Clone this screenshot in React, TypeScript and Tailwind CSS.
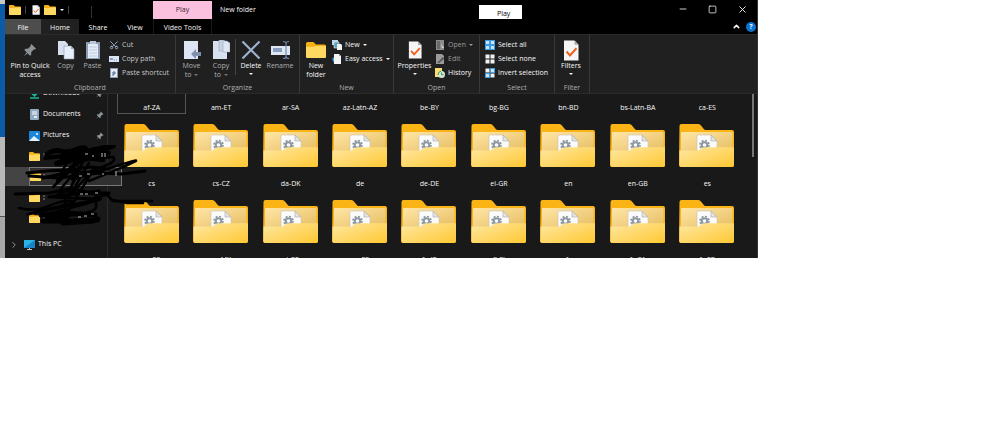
import type { ReactNode } from 'react';
import { Scissors, X, Minus, Square, ChevronUp, ChevronRight } from 'lucide-react';

const folderNames = [
  'af-ZA', 'am-ET', 'ar-SA', 'az-Latn-AZ', 'be-BY', 'bg-BG', 'bn-BD', 'bs-Latn-BA', 'ca-ES',
  'cs', 'cs-CZ', 'da-DK', 'de', 'de-DE', 'el-GR', 'en', 'en-GB', 'es',
  'es-ES', 'es-MX', 'et-EE', 'eu-ES', 'fa-IR', 'fi-FI', 'fr', 'fr-CA', 'fr-FR',
];

function SmallFolder({ className = 'w-3 h-3' }: { className?: string }) {
  return (
    <svg viewBox="0 0 24 20" preserveAspectRatio="none" className={className} aria-hidden="true">
      <path d="M0 2q0-2 2-2h7l3 3h10q2 0 2 2v13q0 2-2 2H2q-2 0-2-2z" fill="#f5b014" />
      <path d="M0 6h10l2-1h12v13q0 2-2 2H2q-2 0-2-2z" fill="#ffd862" />
    </svg>
  );
}

function BigFolder() {
  return (
    <svg viewBox="0 0 56 44" className="w-14 h-11 shrink-0" aria-hidden="true">
      <defs>
        <linearGradient id="front" x1="0" y1="0" x2="1" y2="1">
          <stop offset="0" stopColor="#ffe8a3" />
          <stop offset="1" stopColor="#ffc832" />
        </linearGradient>
        <linearGradient id="inner" x1="0" y1="0" x2="1" y2="1">
          <stop offset="0" stopColor="#ffe6a6" />
          <stop offset="1" stopColor="#e6bd62" />
        </linearGradient>
      </defs>
      <path d="M.5 2Q.5 0 2.500 0h16.500q1.500 0 2.500 1l3.500 4.300q.6.700 1.500.7h26.500q2 0 2 2V41q0 2-2 2h-51q-2 0-2-2z" fill="#fbb415" />
      <rect x="2" y="8" width="51.500" height="20" rx="1" fill="url(#inner)" />
      <path d="M18 11h14l6 6v12h-20z" fill="#fbfbfb" stroke="#c9c4b6" strokeWidth=".6" />
      <path d="M32 11v6h6z" fill="#e3e3e3" stroke="#aaa" strokeWidth=".6" />
      <circle cx="25.500" cy="21" r="2.800" fill="none" stroke="#8b97a3" strokeWidth="2" />
      <circle cx="25.500" cy="21" r="4.500" fill="none" stroke="#8b97a3" strokeWidth="1.600" strokeDasharray="2 1.530" />
      <path d="M.5 26.500h18q1.500 0 2.500-1l1.500-1.300q1-1 2.500-1h30V41q0 2-2 2h-50.500q-2 0-2-2z" fill="url(#front)" />
    </svg>
  );
}

function SheetCheck({ className }: { className: string }) {
  return (
    <svg viewBox="0 0 16 20" preserveAspectRatio="none" className={className} aria-hidden="true">
      <path d="M1 .5h10.500l4 4v15H1z" fill="#f5f5f5" />
      <path d="M11.500.5v4h4z" fill="#a8a8a8" />
      <path d="M3.500 11l3.500 3.800 6.500-7" fill="none" stroke="#f0601e" strokeWidth="2" />
    </svg>
  );
}

function PinIcon({ className }: { className: string }) {
  return (
    <svg viewBox="0 0 16 16" className={`${className} fill-[#8d9499]`} aria-hidden="true">
      <path d="M9.500 1l5.500 5.500-1.500 1-1.200-.2-3 3.200.2 2.700-1.500 1.300-2.700-2.800L1 15l3.300-4.300L1.500 8l1.300-1.500 2.700.2 3.200-3-.2-1.200z" />
    </svg>
  );
}

function CopyIcon() {
  return (
    <svg viewBox="0 0 18 20" className="w-[18px] h-5" aria-hidden="true">
      <path d="M1 1h7l3 3v11H1z" fill="#d5dfee" />
      <path d="M7 6h7l3 3v10H7z" fill="#e7eef9" stroke="#8a99b0" strokeWidth=".6" />
      <path d="M14 6v3h3z" fill="#9aa9bf" />
    </svg>
  );
}

function PasteIcon() {
  return (
    <svg viewBox="0 0 16 20" className="w-4 h-5" aria-hidden="true">
      <rect x="1" y="2" width="14" height="17" fill="#8b9bb3" />
      <rect x="3" y="4" width="10" height="14" fill="#e3ebf7" />
      <rect x="5" y="1" width="6" height="3" fill="#bac6d8" />
      <path d="M4 7h8M4 10h8M4 13h8M4 16h8" stroke="#b8c6da" strokeWidth=".8" />
    </svg>
  );
}

function MoveIcon() {
  return (
    <svg viewBox="0 0 18 20" className="w-[18px] h-5" aria-hidden="true">
      <path d="M1 1h14v18H1z" fill="#dce5f3" />
      <path d="M8 14l5-5v3h5v4h-5v3z" fill="#8091ae" />
    </svg>
  );
}

function CopyToIcon() {
  return (
    <svg viewBox="0 0 18 20" className="w-[18px] h-5" aria-hidden="true">
      <path d="M1 1h14v18H1z" fill="#d7e0ee" />
      <path d="M7 0h5l2 2v9H7z" fill="#c7d2e3" stroke="#8b9ab1" strokeWidth=".5" />
      <path d="M11 1h4l3 2v9h-7z" fill="#dfe7f3" stroke="#8b9ab1" strokeWidth=".5" />
    </svg>
  );
}

function DeleteIcon() {
  return (
    <svg viewBox="0 0 20 20" className="w-5 h-5" aria-hidden="true">
      <path d="M1.500 1.500l17 17M18.500 1.500l-17 17" stroke="#9fb1cf" strokeWidth="2.200" />
    </svg>
  );
}

function RenameIcon() {
  return (
    <svg viewBox="0 0 19 20" className="w-[19px] h-5" aria-hidden="true">
      <rect x="0" y="6" width="19" height="9" fill="#dfe7f3" />
      <rect x="2" y="8" width="9" height="4" fill="#8a9fc0" />
      <path d="M12 1.500q3 0 3 2v13q0 2-3 2M18 1.500q-3 0-3 2v13q0 2 3 2" fill="none" stroke="#6f88ad" strokeWidth="1.200" />
    </svg>
  );
}

function CopyPathIcon() {
  return (
    <svg viewBox="0 0 10 10" className="w-2.5 h-2.5" aria-hidden="true">
      <rect y="2" width="10" height="6" fill="#dbe5f3" />
      <path d="M1 4l1 2 1-2 1 2M5 6h1M7 6h1" stroke="#5d7396" strokeWidth=".7" fill="none" />
    </svg>
  );
}

function ShortcutIcon() {
  return (
    <svg viewBox="0 0 10 10" className="w-2.5 h-2.5" aria-hidden="true">
      <path d="M1 0h8v10H1z" fill="#8b9bb3" />
      <path d="M2 1h6v8H2z" fill="#e6edf8" />
      <path d="M4 8V4h2v2H4" stroke="#4b6894" fill="none" />
    </svg>
  );
}

function NewItemIcon() {
  return (
    <svg viewBox="0 0 10 10" className="w-2.5 h-2.5" aria-hidden="true">
      <path d="M0 0h6v5H0z" fill="#b9d7ea" />
      <path d="M2 2h5v6H2z" fill="#5c9fbd" stroke="#eee" strokeWidth=".6" />
      <path d="M5 4h4l1 1v5H5z" fill="#f3f3f3" />
    </svg>
  );
}

function EasyAccessIcon() {
  return (
    <svg viewBox="0 0 10 10" className="w-2.5 h-2.5" aria-hidden="true">
      <path d="M2 0h5l2 2v8H2z" fill="#f4f4f4" />
      <path d="M7 0v2h2z" fill="#999" />
      <path d="M0 5l2-2v6z" fill="#3d9ad1" />
    </svg>
  );
}

function OpenIcon() {
  return (
    <svg viewBox="0 0 10 10" className="w-2.5 h-2.5" aria-hidden="true">
      <path d="M1 0h8v10H1z" fill="#8d8d8d" />
      <path d="M2 2h3M2 4h3M2 6h3M2 8h3" stroke="#444" />
      <path d="M6 4l3 4H7z" fill="#ddd" />
    </svg>
  );
}

function EditIcon() {
  return (
    <svg viewBox="0 0 10 10" className="w-2.5 h-2.5" aria-hidden="true">
      <path d="M1 0h6l2 2v8H1z" fill="#9b9b9b" />
      <path d="M2 9L8 3l1.500 1.500L4 9z" fill="#555" />
    </svg>
  );
}

function HistoryIcon() {
  return (
    <svg viewBox="0 0 10 10" className="w-2.5 h-2.5" aria-hidden="true">
      <path d="M0 0h7v9H0z" fill="#f7df72" />
      <circle cx="6.500" cy="6.500" r="3.500" fill="#d6e5d8" />
      <path d="M3 7q0-3 3-4M6.500 4.500v2.200h2" stroke="#2c9b4b" fill="none" />
    </svg>
  );
}

function TilesIcon({ blue }: { blue: number[] }) {
  return (
    <svg viewBox="0 0 10 10" className="w-2.5 h-2.5" aria-hidden="true">
      {[0, 1, 2, 3].map((i) => {
        const x = (i % 2) * 5;
        const y = Math.floor(i / 2) * 5;
        return blue.includes(i) ? (
          <g key={i}>
            <rect x={x} y={y} width="5" height="5" fill="#3b9be3" />
            <rect x={x + 1} y={y + 1} width="3" height="3" fill="#c5e5fb" />
          </g>
        ) : (
          <rect key={i} x={x + 0.5} y={y + 0.5} width="4" height="4" fill="#f2f2f2" />
        );
      })}
    </svg>
  );
}

function Caret({ className = '' }: { className?: string }) {
  return (
    <svg viewBox="0 0 4 2" className={`w-1 h-0.5 shrink-0 fill-current ${className}`} aria-hidden="true">
      <path d="M0 0h4L2 2z" />
    </svg>
  );
}

type BigButtonProps = {
  icon: ReactNode;
  lines: string[];
  caret?: 'inline' | 'below';
  width: string;
  dim?: boolean;
};

function BigButton({ icon, lines, caret, width, dim }: BigButtonProps) {
  return (
    <button className={`flex flex-col items-center shrink-0 pt-1 ${width} ${dim ? 'text-[#b0b0b0]' : 'text-[#f8f8f8]'}`}>
      <span className="flex h-[22px] items-center">{icon}</span>
      {lines.map((line, i) => (
        <span key={line} className="flex items-center gap-[3px] leading-[9px] whitespace-nowrap">
          {line}
          {caret === 'inline' && i === lines.length - 1 && <Caret className="text-[#777]" />}
        </span>
      ))}
      {caret === 'below' && <Caret className="mt-[3px]" />}
    </button>
  );
}

type SmallButtonProps = { icon: ReactNode; label: string; caret?: boolean; tone?: string };

function SmallButton({ icon, label, caret, tone = 'text-[#f8f8f8]' }: SmallButtonProps) {
  return (
    <button className={`flex h-[14px] items-center gap-[3px] whitespace-nowrap ${tone}`}>
      {icon}
      {label}
      {caret && <Caret />}
    </button>
  );
}

function Group({ label, width, children }: { label: string; width: string; children: ReactNode }) {
  return (
    <section aria-label={label} className={`flex flex-col shrink-0 border-r border-[#393939] ${width}`}>
      <div className="flex h-12">{children}</div>
      <div className="text-center leading-[10px] text-[#b0b0b0]">{label}</div>
    </section>
  );
}

function TitleBar() {
  return (
    <header className="flex h-[19px] bg-black">
      <div className="flex w-[148px] items-center gap-1 pl-1">
        <SmallFolder className="w-3 h-2.5" />
        <span className="h-2 w-px bg-[#444]" />
        <SheetCheck className="ml-0.5 w-2 h-2.5" />
        <SmallFolder className="w-3 h-2.5" />
        <Caret className="text-white" />
        <span className="h-2 w-px bg-[#444]" />
        <span className="ml-[18px] mt-1 h-3 w-px bg-[#333]" />
      </div>
      <div className="mt-px flex w-[59px] items-center justify-center bg-[#fcc0df] text-[#3a2430]">Play</div>
      <h1 className="pl-2 leading-[19px]">New folder</h1>
      <div className="ml-auto mt-[5px] mr-[156px] h-[14px] w-[43px] bg-white pl-[18px] leading-[18px] text-black">Play</div>
      <div className="flex items-center gap-5 pb-px pr-[9px]">
        <button aria-label="Minimize"><Minus size={10} strokeWidth={2} /></button>
        <button aria-label="Maximize"><Square size={9} strokeWidth={2} /></button>
        <button aria-label="Close"><X size={11} strokeWidth={2} /></button>
      </div>
    </header>
  );
}

function TabRow() {
  return (
    <nav className="flex h-[15px] items-stretch bg-black leading-[9px]">
      <button className="w-9 bg-[#4d4d4d] pt-px">File</button>
      <button className="w-[38px] bg-[#202020] pt-px">Home</button>
      <button className="w-[38px] pt-px">Share</button>
      <button className="w-9 pt-px">View</button>
      <button className="w-[59px] border-x border-[#1a1a1a] pt-px whitespace-nowrap">Video Tools</button>
      <div className="ml-auto flex items-center gap-[5px] pr-px">
        <button aria-label="Collapse ribbon"><ChevronUp size={9} strokeWidth={4} /></button>
        <button aria-label="Help" className="flex h-2.5 w-2.5 items-center justify-center rounded-full bg-[#0a74d4] font-bold">?</button>
      </div>
    </nav>
  );
}

function Ribbon() {
  return (
    <div className="flex h-[60px] border-y border-[#2b2b2b] bg-[#202020]">
      <Group label="Clipboard" width="w-[171px]">
        <BigButton icon={<PinIcon className="w-3.5 h-3.5" />} lines={['Pin to Quick', 'access']} width="w-[50px]" />
        <BigButton icon={<CopyIcon />} lines={['Copy']} width="w-[21px]" dim />
        <BigButton icon={<PasteIcon />} lines={['Paste']} width="w-[33px]" dim />
        <div className="flex flex-col pt-[3px]">
          <SmallButton icon={<Scissors className="w-2.5 h-2.5 -rotate-90 text-[#a9bddb]" />} label="Cut" tone="text-[#c8c8c8]" />
          <SmallButton icon={<CopyPathIcon />} label="Copy path" tone="text-[#c8c8c8]" />
          <SmallButton icon={<ShortcutIcon />} label="Paste shortcut" tone="text-[#c8c8c8]" />
        </div>
      </Group>
      <Group label="Organize" width="w-[124px]">
        <BigButton icon={<MoveIcon />} lines={['Move', 'to']} caret="inline" width="w-[31px]" dim />
        <BigButton icon={<CopyToIcon />} lines={['Copy', 'to']} caret="inline" width="w-[28px]" dim />
        <span className="mt-1 h-9 w-px bg-[#444]" />
        <BigButton icon={<DeleteIcon />} lines={['Delete']} caret="below" width="w-[30px]" />
        <BigButton icon={<RenameIcon />} lines={['Rename']} width="w-[28px]" dim />
      </Group>
      <Group label="New" width="w-[94px]">
        <BigButton icon={<SmallFolder className="w-5 h-4" />} lines={['New', 'folder']} width="w-8" />
        <div className="flex flex-col pt-[3px]">
          <SmallButton icon={<NewItemIcon />} label="New" caret />
          <SmallButton icon={<EasyAccessIcon />} label="Easy access" caret />
        </div>
      </Group>
      <Group label="Open" width="w-[86px]">
        <BigButton icon={<SheetCheck className="w-3.5 h-[18px]" />} lines={['Properties']} caret="below" width="w-[41px]" />
        <div className="flex flex-col pt-[3px]">
          <SmallButton icon={<OpenIcon />} label="Open" caret tone="text-[#9a9a9a]" />
          <SmallButton icon={<EditIcon />} label="Edit" tone="text-[#9a9a9a]" />
          <SmallButton icon={<HistoryIcon />} label="History" />
        </div>
      </Group>
      <Group label="Select" width="w-[75px]">
        <div className="flex flex-col pt-[3px] pl-[5px]">
          <SmallButton icon={<TilesIcon blue={[0, 1, 2, 3]} />} label="Select all" />
          <SmallButton icon={<TilesIcon blue={[]} />} label="Select none" />
          <SmallButton icon={<TilesIcon blue={[1, 2]} />} label="Invert selection" />
        </div>
      </Group>
      <Group label="Filter" width="w-[35px]">
        <BigButton icon={<SheetCheck className="w-4 h-[21px]" />} lines={['Filters']} caret="below" width="w-8" />
      </Group>
    </div>
  );
}

function NavItem({ icon, label, pinned }: { icon: ReactNode; label?: string; pinned?: boolean }) {
  return (
    <li className="flex h-[21px] items-center gap-[3px] pl-6 pr-[3px]">
      {icon}
      {label && <a href="#" className="whitespace-nowrap">{label}</a>}
      {pinned && <PinIcon className="ml-auto w-2 h-2" />}
    </li>
  );
}

// hand-drawn marker strokes that hide the private folder names
function Scribble() {
  return (
    <svg viewBox="0 0 150 84" className="absolute left-0 top-[51px] w-[150px] h-[84px] pointer-events-none" aria-hidden="true">
      <path d="M38 9h2M38 12h2M38 30h2M38 51h2M38 54h2M38 73h2" stroke="#8a8a8a" strokeWidth="1" />
      <g fill="none" stroke="#000" strokeLinecap="round" strokeLinejoin="round">
        <path d="M42 9q8-5 14-3t14-1 10-2-18 7 26-5-12 6 22-4" strokeWidth="5" />
        <path d="M40 13l18-2 14 2 20-4 12-1-18 6 12 1" strokeWidth="4" />
        <path d="M64 26q8-10 22-12t22-2q4 4-6 8t-30 12 36-10-24 14" strokeWidth="2.500" />
        <path d="M22 28l20-2 20-1 24-3 18 2M24 31l30 2 40-5 22 1 24-3M38 33l26-6 34 0" strokeWidth="3" />
        <path d="M68 6l-16 30 22-22-26 28 32-30-18 40 12-30-20 24M84 18l-20 34 26-30-28 46M52 50l14-6" strokeWidth="2.500" />
        <path d="M10 49l34-1 20-4 26 4h14l-16 6-40-2 46-6M44 52l30-4 28 1" strokeWidth="3" />
        <path d="M102 50l6 6 24 0 15 0M108 55l14 3h16" strokeWidth="2.500" />
        <path d="M14 63q16 4 30-2t22-5-30 10 30-6-20 8M91 50v12q0 4-14 7l-16 2M60 54v22" strokeWidth="2.500" />
        <path d="M36 70l24-2 30 2M38 76l26 0 28-1M42 72l20 0-4 6 30-2 5-2" strokeWidth="5" />
      </g>
      <path d="M80 9h3m4 2h2m8-3v4m3-4v4M74 31h3m5-2h3m12 0h2m12-3v5M75 49h3m2 0h3m7-1h3M73 72h3m3-1h3m4-2h3" stroke="#bdbdbd" strokeWidth="1" />
    </svg>
  );
}

function Sidebar() {
  return (
    <aside className="relative z-10 w-[103px] shrink-0 border-r border-[#2b2b2b]">
      <ul className="-mt-[11px]">
        <NavItem
          label="Downloads"
          pinned
          icon={
            <svg viewBox="0 0 11 11" className="w-[11px] h-[11px]" aria-hidden="true">
              <path d="M5.500 0v7M2.500 5l3 3 3-3M1 10h9" fill="none" stroke="#19b795" strokeWidth="1.500" />
            </svg>
          }
        />
        <NavItem
          label="Documents"
          pinned
          icon={
            <svg viewBox="0 0 11 11" className="w-[11px] h-[11px]" aria-hidden="true">
              <rect x="1" width="9" height="11" rx="1" fill="#8fa9bf" />
              <path d="M3 3h5M3 5h5" stroke="#fff" />
              <path d="M5 7h3v2H5z" fill="#dfe9f1" />
            </svg>
          }
        />
        <NavItem
          label="Pictures"
          pinned
          icon={
            <svg viewBox="0 0 11 11" className="w-[11px] h-[11px]" aria-hidden="true">
              <rect y="1" width="11" height="10" rx="1" fill="#1c86da" />
              <path d="M0 11l5-5 6 5z" fill="#e6f4ff" />
              <circle cx="8" cy="4" r="1" fill="#fff" />
            </svg>
          }
        />
        <NavItem icon={<SmallFolder className="w-[11px] h-[9px]" />} />
        <li className="mb-px flex h-[19px] w-[117px] bg-[#444] pl-6">
          <span className="flex flex-1 items-center border border-[#777] bg-[#303030]">
            <SmallFolder className="w-[11px] h-[9px]" />
          </span>
        </li>
        <NavItem icon={<SmallFolder className="w-[11px] h-[9px]" />} />
        <NavItem icon={<SmallFolder className="w-[11px] h-[9px]" />} />
      </ul>
      <div className="mt-[5px] flex h-[21px] items-center pl-1">
        <ChevronRight size={10} className="text-[#aaa]" />
        <svg viewBox="0 0 11 10" className="ml-[5px] mr-[3px] w-[11px] h-2.5" aria-hidden="true">
          <rect width="11" height="8" fill="#28b4e4" />
          <path d="M0 8l11-8v8z" fill="#1684c6" />
          <path d="M5 8h1v1h2v1H3V9h2z" fill="#b9c7ce" />
        </svg>
        <a href="#">This PC</a>
      </div>
      <Scribble />
    </aside>
  );
}

function FileGrid() {
  return (
    <main className="min-w-0 flex-1 pl-[9px] pr-[10px]">
      <ul className="-mt-14 grid grid-cols-9">
        {folderNames.map((name, i) => (
          <li key={name} className={`flex h-[76px] flex-col items-center justify-between pt-[10px] pb-0.5 ${i === 0 ? 'outline outline-1 -outline-offset-1 outline-[#555]' : ''}`}>
            <BigFolder />
            <span className="leading-[9px] whitespace-nowrap">{name}</span>
          </li>
        ))}
      </ul>
    </main>
  );
}

export default function App() {
  return (
    <div className="flex min-h-screen items-start bg-white font-['Open_Sans',sans-serif] text-[7px] font-medium">
      <div className="flex w-full max-w-[758px]">
        <div className="flex w-[5px] shrink-0 flex-col">
          <div className="h-1 bg-[#c8c8c8]" />
          <div className="h-[133px] bg-[#0b5ca8]" />
          <div className="h-20 border-b border-[#555] bg-[#b9b9b9]" />
          <div className="flex-1 bg-[#a9a9a9]" />
        </div>
        <div className="min-w-0 flex-1 border-r border-[#333] bg-[#191919] text-[#f8f8f8]">
          <TitleBar />
          <TabRow />
          <Ribbon />
          <div className="flex h-[164px] overflow-hidden">
            <Sidebar />
            <FileGrid />
            <div className="h-[63px] w-0.5 shrink-0 bg-[#777]" />
            <div className="w-[3px] shrink-0" />
          </div>
        </div>
      </div>
    </div>
  );
}
